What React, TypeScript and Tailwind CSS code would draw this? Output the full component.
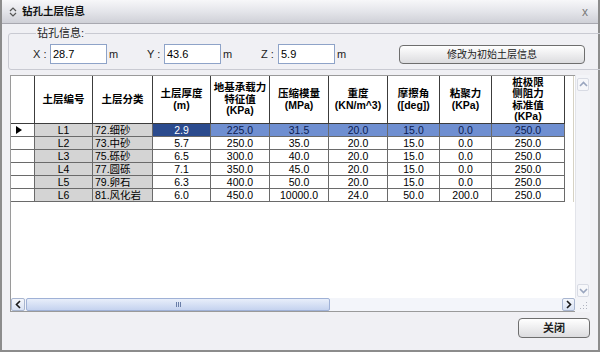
import React from 'react';

const font = "font-['Liberation_Sans','Noto_Sans_CJK_SC',sans-serif]";

const rows = [
  { id: 'L1', type: '72.细砂', h: '2.9', fk: '225.0', es: '31.5', g: '20.0', phi: '15.0', c: '0.0', q: '250.0' },
  { id: 'L2', type: '73.中砂', h: '5.7', fk: '250.0', es: '35.0', g: '20.0', phi: '15.0', c: '0.0', q: '250.0' },
  { id: 'L3', type: '75.砾砂', h: '6.5', fk: '300.0', es: '40.0', g: '20.0', phi: '15.0', c: '0.0', q: '250.0' },
  { id: 'L4', type: '77.圆砾', h: '7.1', fk: '350.0', es: '45.0', g: '20.0', phi: '15.0', c: '0.0', q: '250.0' },
  { id: 'L5', type: '79.卵石', h: '6.3', fk: '400.0', es: '50.0', g: '20.0', phi: '15.0', c: '0.0', q: '250.0' },
  { id: 'L6', type: '81.风化岩', h: '6.0', fk: '450.0', es: '10000.0', g: '24.0', phi: '50.0', c: '200.0', q: '250.0' },
];

// numeric columns: header lines + width
const numCols = [
  { key: 'h', w: 'w-[58px]', lines: ['土层厚度', '(m)'] },
  { key: 'fk', w: 'w-[59px]', lines: ['地基承载力', '特征值', '(KPa)'] },
  { key: 'es', w: 'w-[59px]', lines: ['压缩模量', '(MPa)'] },
  { key: 'g', w: 'w-[59px]', lines: ['重度', '(KN/m^3)'] },
  { key: 'phi', w: 'w-[52px]', lines: ['摩擦角', '([deg])'] },
  { key: 'c', w: 'w-[52px]', lines: ['粘聚力', '(KPa)'] },
  { key: 'q', w: 'w-[73px]', lines: ['桩极限', '侧阻力', '标准值', '(KPa)'] },
] as const;

const headCell = 'shrink-0 h-full border-r border-b border-[#3c3c3c] flex flex-col items-center justify-center font-bold text-[10.5px] leading-[11.5px]';
const rowCell = 'shrink-0 h-full border-r border-b border-[#6a6a6a] flex items-center text-[10.5px] leading-none';

const Field: React.FC<{ label: string; value: string }> = ({ label, value }) => (
  <div className="flex items-center w-[114px] shrink-0">
    <span className="w-[17px] text-[11px] text-[#222]">{label}</span>
    <div className="w-[57px] h-[20px] border border-[#8ea3c8] bg-white text-[11px] px-[2px] pt-[1px] leading-[16px]">
      {value}
    </div>
    <span className="ml-[2px] text-[11px] text-[#222]">m</span>
  </div>
);

const Chevron: React.FC<{ dir: 'up' | 'down' | 'left' | 'right'; color?: string }> = ({ dir, color = '#9aa6bf' }) => {
  const d = {
    up: 'M1 6 L4.5 2.5 L8 6',
    down: 'M1 3 L4.5 6.5 L8 3',
    left: 'M6 1 L2.5 4.5 L6 8',
    right: 'M3 1 L6.5 4.5 L3 8',
  }[dir];
  return (
    <svg width="9" height="9" viewBox="0 0 9 9">
      <path d={d} fill="none" stroke={color} strokeWidth="1.6" />
    </svg>
  );
};

const App: React.FC = () => {
  return (
    <div className={`w-[600px] h-[352px] flex flex-col bg-[#f0f0f4] border-x-2 border-b-2 border-[#8c8c8c] text-black ${font}`}>
      {/* Title bar */}
      <div className="h-[24px] shrink-0 flex items-center pl-[7px] pr-[10px] bg-linear-to-b from-[#f7f7f9] via-[#e4e5ea] to-[#cfd0d7] border-b border-[#a8a8b0]">
        <svg width="8" height="10" viewBox="0 0 8 10" className="mr-[5px]">
          <path d="M1 4 L4 1 L7 4" fill="none" stroke="#555" strokeWidth="1.2" />
          <path d="M1 6 L4 9 L7 6" fill="none" stroke="#555" strokeWidth="1.2" />
        </svg>
        <span className="font-bold text-[10.5px] text-[#111]">钻孔土层信息</span>
        <span className="ml-auto text-[12px] text-[#7a7a7a] leading-none">x</span>
      </div>

      <div className="flex flex-col px-[6px]">
        {/* Group box */}
        <fieldset className="mt-[3px] border border-[#c9cad2] rounded-[3px] px-[24px] pt-[5px] pb-[5px] h-[43px]">
          <legend className="ml-[3px] px-[1px] text-[11px] leading-[12px] text-[#222]">钻孔信息:</legend>
          <div className="flex items-center">
            <Field label="X :" value="28.7" />
            <Field label="Y :" value="43.6" />
            <Field label="Z :" value="5.9" />
            <button className="ml-[24px] w-[186px] h-[19px] rounded-[4px] border border-[#6e6e6e] bg-linear-to-b from-white to-[#dcdcdf] text-[10px] text-[#222]">
              修改为初始土层信息
            </button>
          </div>
        </fieldset>

        {/* Grid */}
        <div className="mt-[5px] ml-[2px] w-[580px] h-[237px] flex flex-col">
          <div className="flex h-[223px]">
            <div className="flex-1 bg-white border-l border-t border-[#9a9a9a] flex flex-col">
              <div className="flex h-[48px]">
                <div className={`${headCell} w-[24px]`} />
                <div className={`${headCell} w-[58px]`}>土层编号</div>
                <div className={`${headCell} w-[60px]`}>土层分类</div>
                {numCols.map(c => (
                  <div key={c.key} className={`${headCell} ${c.w}`}>
                    {c.lines.map(l => (
                      <span key={l}>{l}</span>
                    ))}
                  </div>
                ))}
                <div className="w-[9px] h-full border-r border-[#d6d2c4]" />
              </div>
              {rows.map((r, i) => {
                const sel = i === 0;
                return (
                  <div key={r.id} className="flex h-[13px]">
                    <div className={`${rowCell} w-[24px] bg-white pl-[5px]`}>
                      {sel && (
                        <svg width="6" height="8" viewBox="0 0 6 8">
                          <polygon points="0,0 6,4 0,8" fill="#000" />
                        </svg>
                      )}
                    </div>
                    <div className={`${rowCell} w-[58px] bg-[#d4d4d4] justify-center`}>{r.id}</div>
                    <div className={`${rowCell} w-[60px] bg-[#d4d4d4] pl-[2px]`}>{r.type}</div>
                    {numCols.map((c, j) => (
                      <div
                        key={c.key}
                        className={`${rowCell} ${c.w} justify-center ${
                          sel ? (j === 0 ? 'bg-[#2b4b8e] text-white' : 'bg-[#6f8fd1] text-[#0c1c52]') : 'bg-white'
                        }`}
                      >
                        {r[c.key]}
                      </div>
                    ))}
                    <div className="w-[9px] h-full border-r border-[#d6d2c4]" />
                  </div>
                );
              })}
            </div>
            {/* vertical scrollbar */}
            <div className="w-[15px] flex flex-col justify-between bg-[#f3f4f8] border-l border-[#e2e4ea] pt-[3px] pb-[1px]">
              <div className="h-[13px] mx-[1px] border border-[#d8dbe4] rounded-[2px] bg-[#f6f7fa] flex items-center justify-center">
                <Chevron dir="up" />
              </div>
              <div className="h-[13px] mx-[1px] border border-[#d8dbe4] rounded-[2px] bg-[#f6f7fa] flex items-center justify-center">
                <Chevron dir="down" />
              </div>
            </div>
          </div>
          {/* horizontal scrollbar */}
          <div className="flex h-[14px]">
            <div className="flex-1 flex bg-[#f3f5fa] border-l border-b border-[#9a9a9a]">
              <div className="w-[14px] border border-[#a9b6d0] rounded-[2px] bg-linear-to-b from-[#f5f7fc] to-[#d9e2f3] flex items-center justify-center">
                <Chevron dir="left" color="#1a1a1a" />
              </div>
              <div className="w-[304px] ml-[1px] border border-[#9fb1d6] rounded-[2px] bg-linear-to-b from-[#e8eefa] to-[#c5d3ef] flex items-center justify-center gap-[1px]">
                <span className="w-px h-[5px] bg-[#6a7ea8]" />
                <span className="w-px h-[5px] bg-[#6a7ea8]" />
                <span className="w-px h-[5px] bg-[#6a7ea8]" />
              </div>
              <div className="ml-auto w-[13px] border border-[#a9b6d0] rounded-[2px] bg-linear-to-b from-[#f5f7fc] to-[#d9e2f3] flex items-center justify-center">
                <Chevron dir="right" color="#1a1a1a" />
              </div>
            </div>
            <div className="w-[15px] bg-[#f3f4f8] flex items-end justify-end p-[2px]">
              <svg width="8" height="8" viewBox="0 0 8 8">
                <rect x="6" y="0" width="1" height="1" fill="#b0b4c0" />
                <rect x="3" y="3" width="1" height="1" fill="#b0b4c0" />
                <rect x="6" y="3" width="1" height="1" fill="#b0b4c0" />
                <rect x="0" y="6" width="1" height="1" fill="#b0b4c0" />
                <rect x="3" y="6" width="1" height="1" fill="#b0b4c0" />
                <rect x="6" y="6" width="1" height="1" fill="#b0b4c0" />
              </svg>
            </div>
          </div>
        </div>

        {/* Footer */}
        <div className="flex justify-end mt-[6px] pr-[2px]">
          <button className="w-[72px] h-[20px] rounded-[4px] border border-[#6e6e6e] bg-linear-to-b from-white to-[#dcdcdf] text-[11px] font-bold text-[#222]">
            关闭
          </button>
        </div>
      </div>
    </div>
  );
};

export default App;
